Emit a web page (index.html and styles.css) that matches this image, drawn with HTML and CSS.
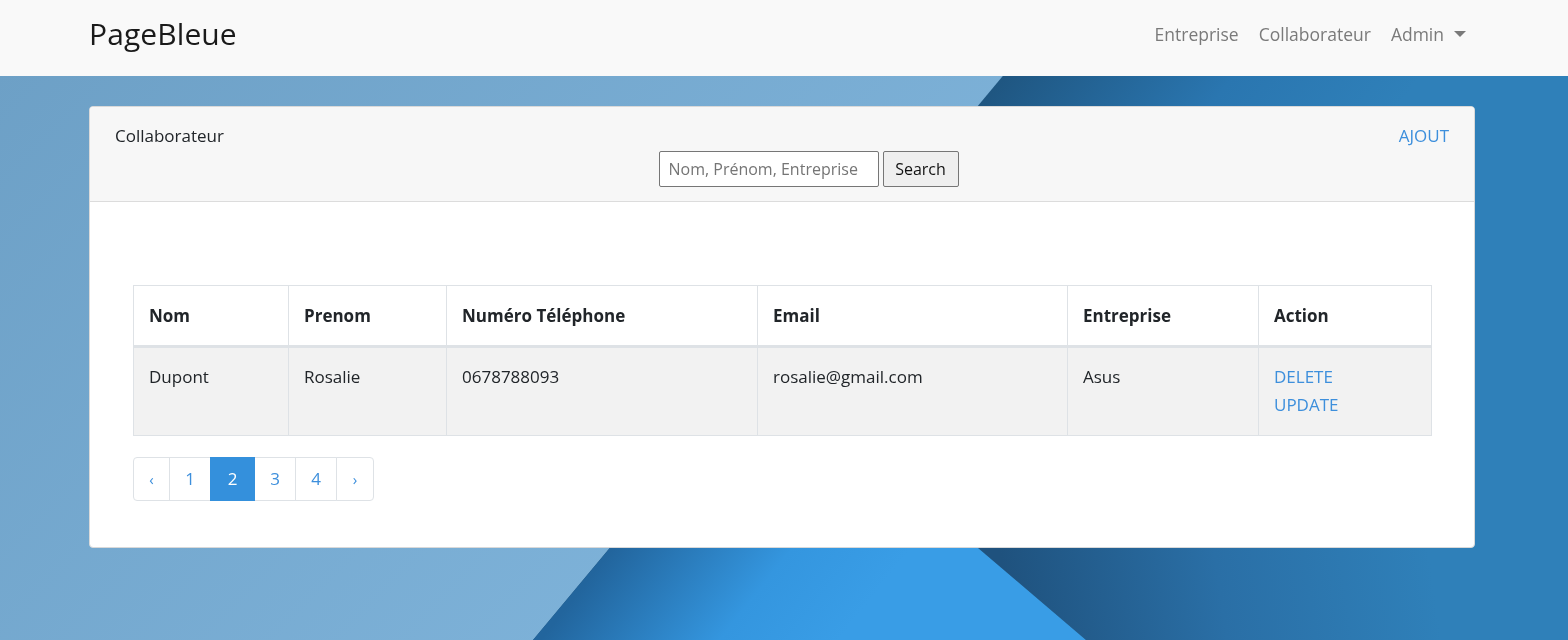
FILE: index.html
```html
<!DOCTYPE html>
<html lang="fr">
<head>
<meta charset="utf-8">
<title>PageBleue</title>
<link rel="stylesheet" href="styles.css">
</head>
<body>
<div class="backdrop">
  <svg width="1568" height="640" viewBox="0 0 1568 640" preserveAspectRatio="none">
    <defs>
      <linearGradient id="gLight" x1="0" y1="0" x2="1" y2="0.4">
        <stop offset="0" stop-color="#6c9fc5"/>
        <stop offset="1" stop-color="#86bbe2"/>
      </linearGradient>
      <linearGradient id="gTop" gradientUnits="userSpaceOnUse" x1="1003" y1="76" x2="1260" y2="280">
        <stop offset="0" stop-color="#1f5681"/>
        <stop offset="0.55" stop-color="#2a76b0"/>
        <stop offset="1" stop-color="#2f80b9"/>
      </linearGradient>
      <linearGradient id="gMid" gradientUnits="userSpaceOnUse" x1="580" y1="590" x2="764" y2="735">
        <stop offset="0" stop-color="#22659d"/>
        <stop offset="0.6" stop-color="#3496df"/>
        <stop offset="1" stop-color="#399de6"/>
      </linearGradient>
      <linearGradient id="gRight" gradientUnits="userSpaceOnUse" x1="1010" y1="620" x2="1430" y2="560">
        <stop offset="0" stop-color="#1f527e"/>
        <stop offset="0.5" stop-color="#2a6fa6"/>
        <stop offset="1" stop-color="#2f80b9"/>
      </linearGradient>
    </defs>
    <rect x="0" y="0" width="1568" height="640" fill="url(#gLight)"/>
    <polygon points="1066,0 1568,0 1568,640 533,640" fill="url(#gTop)"/>
    <polygon points="625,530 957,530 1086,640 533,640" fill="url(#gMid)"/>
    <polygon points="957,530 1568,530 1568,640 1086,640" fill="url(#gRight)"/>
  </svg>
</div>

<nav class="navbar">
  <a class="brand" href="#">PageBleue</a>
  <ul class="nav-links">
    <li><a href="#">Entreprise</a></li>
    <li><a href="#">Collaborateur</a></li>
    <li><a href="#" class="dropdown">Admin<span class="caret"></span></a></li>
  </ul>
</nav>

<main class="container">
  <section class="card">
    <header class="card-header">
      <div class="header-row">
        <span class="card-title">Collaborateur</span>
        <a class="link" href="#">AJOUT</a>
      </div>
      <form class="search">
        <input type="text" placeholder="Nom, Prénom, Entreprise">
        <button type="button">Search</button>
      </form>
    </header>
    <div class="card-body">
      <table class="table">
        <colgroup>
          <col class="c-nom"><col class="c-prenom"><col class="c-tel"><col class="c-email"><col class="c-ent"><col class="c-act">
        </colgroup>
        <thead>
          <tr><th>Nom</th><th>Prenom</th><th>Numéro Téléphone</th><th>Email</th><th>Entreprise</th><th>Action</th></tr>
        </thead>
        <tbody>
          <tr>
            <td>Dupont</td><td>Rosalie</td><td>0678788093</td><td>rosalie@gmail.com</td><td>Asus</td>
            <td><a class="link block" href="#">DELETE</a><a class="link block" href="#">UPDATE</a></td>
          </tr>
        </tbody>
      </table>
      <ul class="pagination">
        <li><a href="#" class="pg arrow">‹</a></li>
        <li><a href="#" class="pg">1</a></li>
        <li><a href="#" class="pg active">2</a></li>
        <li><a href="#" class="pg">3</a></li>
        <li><a href="#" class="pg">4</a></li>
        <li><a href="#" class="pg arrow">›</a></li>
      </ul>
    </div>
  </section>
</main>
</body>
</html>
```

FILE: styles.css
```css
* { box-sizing: border-box; }

html, body {
  margin: 0;
  height: 640px;
  overflow: hidden;
}

body {
  font-family: "Open Sans", "DejaVu Sans", sans-serif;
  color: #212529;
  font-size: 17px;
  line-height: 28px;
}

a { text-decoration: none; }

.backdrop {
  position: fixed;
  inset: 0;
  z-index: -1;
}
.backdrop svg { display: block; }

.navbar {
  height: 76px;
  background: #f9f9f9;
  display: flex;
  align-items: center;
  justify-content: space-between;
  padding: 0 102px 9px 89px;
}

.brand {
  font-size: 30px;
  color: #1a1a1a;
  line-height: 40px;
  letter-spacing: 0.1px;
}

.nav-links {
  list-style: none;
  display: flex;
  margin: 0;
  padding: 0;
  gap: 20px;
}

.nav-links a {
  color: #7a7a7a;
  font-size: 17.5px;
  display: flex;
  align-items: center;
}

.caret {
  display: inline-block;
  width: 0;
  height: 0;
  margin-left: 10px;
  border-top: 6px solid #7a7a7a;
  border-left: 6px solid transparent;
  border-right: 6px solid transparent;
}

.container {
  padding: 30px 93px 0 89px;
}

.card {
  background: #fff;
  border: 1px solid #d9d9d9;
  border-radius: 4px;
  overflow: hidden;
}

.card-header {
  background: #f7f7f7;
  border-bottom: 1px solid #dcdcdc;
  padding: 15px 25px 14px;
}

.header-row {
  display: flex;
  justify-content: space-between;
  align-items: center;
}

.card-title { font-size: 17px; }

.link { color: #3d8fdc; }
.link.block { display: block; }

.search {
  display: flex;
  justify-content: center;
  gap: 4px;
  margin-top: 1px;
  padding-left: 53px;
}

.search input {
  width: 220px;
  height: 36px;
  border: 1px solid #767676;
  border-radius: 2px;
  padding: 0 9px;
  font-family: inherit;
  font-size: 16px;
  color: #212529;
  background: #fff;
}
.search input::placeholder { color: #757575; }

.search button {
  height: 36px;
  width: 76px;
  border: 1px solid #767676;
  border-radius: 2px;
  background: #efefef;
  font-family: inherit;
  font-size: 16px;
  color: #111;
  padding: 0;
}

.card-body {
  padding: 83px 43px 46px 43px;
}

.table {
  width: 100%;
  border-collapse: collapse;
  table-layout: fixed;
  border: 1px solid #dee2e6;
}

.c-nom { width: 155px; }
.c-prenom { width: 158px; }
.c-tel { width: 311px; }
.c-email { width: 310px; }
.c-ent { width: 191px; }
.c-act { width: 173px; }

.table th, .table td {
  border: 1px solid #dee2e6;
  padding: 15px 15px;
  text-align: left;
  vertical-align: top;
  font-size: 17px;
}

.table th {
  font-weight: 700;
  border-bottom: 3px solid #dee2e6;
  padding-top: 16px;
  padding-bottom: 15px;
}

.table tbody tr { background: #f2f2f2; }
.table td { padding-top: 15px; padding-bottom: 16px; }

.pagination {
  list-style: none;
  display: flex;
  margin: 21px 0 0;
  padding: 0;
}

.pg {
  display: flex;
  align-items: center;
  justify-content: center;
  height: 44px;
  width: 42px;
  border: 1px solid #dee2e6;
  margin-left: -1px;
  color: #3d8fdc;
  font-size: 17px;
  background: #fff;
}

.pagination li:first-child .pg {
  margin-left: 0;
  width: 37px;
  border-radius: 4px 0 0 4px;
}
.pagination li:last-child .pg {
  width: 38px;
  border-radius: 0 4px 4px 0;
}

.pg.arrow { font-size: 15px; }

.pg.active {
  background: #3490dc;
  border-color: #3490dc;
  color: #fff;
  width: 45px;
  position: relative;
}
```
